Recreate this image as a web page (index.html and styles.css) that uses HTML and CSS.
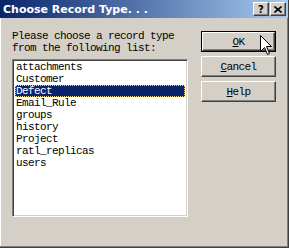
FILE: index.html
```html
<!DOCTYPE html>
<html lang="en">
<head>
  <meta charset="UTF-8">
  <title>Choose Record Type...</title>
  <link rel="stylesheet" href="styles.css">
</head>
<body>
  <div class="window">
    <div class="titlebar">
      <span class="title">Choose Record Type. . .</span>
      <div class="title-buttons">
        <span class="tbtn help-btn">?</span>
        <span class="tbtn close-btn">
          <svg width="8" height="7" viewBox="0 0 8 7">
            <path d="M0.5 0.5 L7.5 6.5 M7.5 0.5 L0.5 6.5" stroke="#000" stroke-width="1.6"/>
          </svg>
        </span>
      </div>
    </div>
    <div class="content">
      <div class="left">
        <p class="prompt">Please choose a record type<br>from the following list:</p>
        <ul class="listbox">
          <li>attachments</li>
          <li>Customer</li>
          <li class="selected">Defect</li>
          <li>Email_Rule</li>
          <li>groups</li>
          <li>history</li>
          <li>Project</li>
          <li>ratl_replicas</li>
          <li>users</li>
        </ul>
      </div>
      <div class="right">
        <div class="default-frame"><button class="btn"><u>O</u>K</button></div>
        <button class="btn"><u>C</u>ancel</button>
        <button class="btn"><u>H</u>elp</button>
      </div>
    </div>
    <svg class="cursor" width="13" height="21" viewBox="0 0 13 21">
      <path d="M0.5 0.5 L0.5 16.5 L4.5 12.5 L7.5 19.5 L9.5 18.5 L6.5 11.5 L11.5 11.5 Z" fill="#fff" stroke="#000" stroke-width="1"/>
    </svg>
  </div>
</body>
</html>
```

FILE: styles.css
```css
body {
  margin: 0;
  padding: 0;
  background: #d4d0c8;
}
.window {
  position: relative;
  width: 289px;
  height: 248px;
  box-sizing: border-box;
  background: #d4d0c8;
  border-right: 1px solid #404040;
  border-bottom: 1px solid #404040;
  box-shadow: inset -1px -1px #808080, inset 1px 0 #fff;
  font-family: "Liberation Mono", monospace;
  font-size: 11px;
  letter-spacing: -0.6px;
  color: #000;
}
.titlebar {
  height: 18px;
  display: flex;
  align-items: center;
  justify-content: space-between;
  background: linear-gradient(to right, #0a246a, #a6caf0);
  padding: 0 2px 0 3px;
}
.title {
  font-family: "DejaVu Sans", sans-serif;
  font-weight: bold;
  font-size: 11px;
  letter-spacing: 0;
  color: #fff;
}
.title-buttons {
  display: flex;
  gap: 1px;
}
.tbtn {
  width: 16px;
  height: 14px;
  box-sizing: border-box;
  display: flex;
  align-items: center;
  justify-content: center;
  background: #d4d0c8;
  border-top: 1px solid #fff;
  border-left: 1px solid #fff;
  border-right: 1px solid #404040;
  border-bottom: 1px solid #404040;
  box-shadow: inset -1px -1px #808080;
}
.help-btn {
  font-family: "DejaVu Sans", sans-serif;
  font-weight: bold;
  font-size: 10px;
  letter-spacing: 0;
}
.content {
  display: flex;
  padding: 12px 0 0 12px;
}
.left {
  width: 176px;
}
.prompt {
  margin: 0 0 5px 0;
  line-height: 12px;
}
.listbox {
  list-style: none;
  margin: 0;
  padding: 0;
  height: 158px;
  box-sizing: border-box;
  background: #fff;
  border-top: 1px solid #808080;
  border-left: 1px solid #808080;
  border-right: 1px solid #fff;
  border-bottom: 1px solid #fff;
  box-shadow: inset 1px 1px #404040, inset -1px -1px #d4d0c8;
  padding: 1px 2px;
}
.listbox li {
  height: 12px;
  line-height: 12px;
  padding-left: 1px;
  white-space: nowrap;
}
.listbox li.selected {
  background: #0a246a;
  color: #fff;
  outline: 1px dotted #f2d88a;
  outline-offset: -1px;
}
.right {
  margin-left: 13px;
  padding-top: 1px;
  display: flex;
  flex-direction: column;
  gap: 4px;
}
.default-frame {
  border: 1px solid #000;
  width: 75px;
  height: 21px;
  box-sizing: border-box;
}
.btn {
  width: 75px;
  height: 21px;
  margin: 0;
  padding: 0;
  box-sizing: border-box;
  background: #d4d0c8;
  border-top: 1px solid #fff;
  border-left: 1px solid #fff;
  border-right: 1px solid #404040;
  border-bottom: 1px solid #404040;
  box-shadow: inset -1px -1px #808080;
  font-family: "Liberation Mono", monospace;
  font-size: 11px;
  letter-spacing: -0.6px;
  color: #000;
}
.default-frame .btn {
  width: 73px;
  height: 19px;
}
.cursor {
  position: absolute;
  left: 260px;
  top: 35px;
}
```
